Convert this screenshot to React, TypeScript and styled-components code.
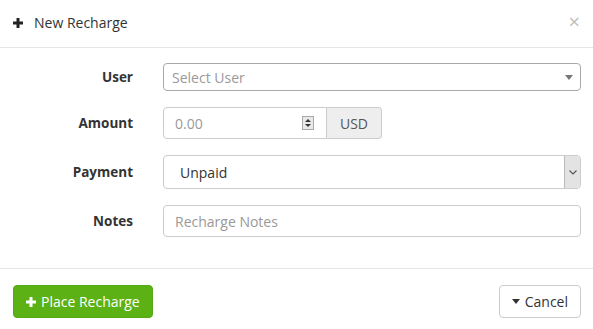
import styled, { createGlobalStyle } from "styled-components";

const GlobalStyle = createGlobalStyle`
  html, body {
    margin: 0;
    padding: 0;
    background: #fff;
  }
  body {
    font-family: "Open Sans", "Liberation Sans", sans-serif;
    color: #333;
    -webkit-font-smoothing: antialiased;
  }
  * { box-sizing: border-box; }
`;

const Modal = styled.div`
  width: 593px;
  height: 329px;
  background: #fff;
  display: flex;
  flex-direction: column;
`;

const Header = styled.div`
  height: 48px;
  border-bottom: 1px solid #e5e5e5;
  display: flex;
  align-items: center;
  padding: 0 13px 2px 13px;
`;

const Title = styled.h4`
  margin: 0;
  flex: 1;
  display: flex;
  align-items: center;
  gap: 11px;
  font-size: 14px;
  font-weight: 400;
  color: #333;
`;

const Close = styled.span`
  color: #bdbdbd;
  font-size: 20px;
  line-height: 1;
  margin-top: -2px;
`;

const Body = styled.div`
  padding: 15px 12px 15px 15px;
  display: flex;
  flex-direction: column;
  gap: 16px;
  height: 221px;
  border-bottom: 1px solid #e5e5e5;
`;

const Row = styled.div`
  display: grid;
  grid-template-columns: 118px 1fr;
  column-gap: 30px;
  align-items: center;
`;

const Label = styled.label`
  text-align: right;
  font-size: 13.5px;
  font-weight: 700;
  color: #333;
`;

const Field = styled.div<{ $h: number; $border?: string; $pl?: number }>`
  height: ${p => p.$h}px;
  border: 1px solid ${p => p.$border || "#ccc"};
  border-radius: 4px;
  background: #fff;
  display: flex;
  align-items: center;
  padding-left: ${p => p.$pl ?? 11}px;
  font-size: 14px;
  color: #333;
  overflow: hidden;
`;

const Placeholder = styled.span`
  color: #999;
  flex: 1;
`;

const Value = styled.span`
  flex: 1;
`;

const Caret = styled.span`
  width: 0;
  height: 0;
  border-left: 4px solid transparent;
  border-right: 4px solid transparent;
  border-top: 5px solid #777;
  margin-right: 7px;
`;

const Group = styled.div`
  display: flex;
  width: 219px;
`;

const NumberBox = styled(Field)`
  flex: 1;
  border-radius: 4px 0 0 4px;
  padding-right: 12px;
`;

const Spinner = styled.span`
  width: 12px;
  height: 14px;
  border: 1px solid #a9a9a9;
  background: #e9e9e9;
  display: flex;
  flex-direction: column;
  align-items: center;
  justify-content: space-around;
  padding: 1px 0;
`;

const Tri = styled.span<{ $up?: boolean }>`
  width: 0;
  height: 0;
  border-left: 3px solid transparent;
  border-right: 3px solid transparent;
  ${p => (p.$up ? "border-bottom: 3px solid #333;" : "border-top: 3px solid #333;")}
`;

const Addon = styled.span`
  width: 55px;
  height: 32px;
  border: 1px solid #ccc;
  border-left: none;
  border-radius: 0 4px 4px 0;
  background: #eee;
  color: #555;
  font-size: 14px;
  display: flex;
  align-items: center;
  justify-content: center;
`;

const SelectButton = styled.span`
  width: 16px;
  align-self: stretch;
  background: #e3e3e3;
  border-left: 1px solid #bbb;
  display: flex;
  align-items: center;
  justify-content: center;
`;

const Footer = styled.div`
  flex: 1;
  display: flex;
  justify-content: space-between;
  align-items: flex-start;
  padding: 16px 12px 0 13px;
`;

const Button = styled.button<{ $primary?: boolean }>`
  height: 33px;
  padding: 0 12px;
  border-radius: 4px;
  font-family: inherit;
  font-size: 14px;
  display: flex;
  align-items: center;
  gap: 5px;
  cursor: pointer;
  border: 1px solid ${p => (p.$primary ? "#55a912" : "#ccc")};
  background: ${p => (p.$primary ? "#5cb115" : "#fff")};
  color: ${p => (p.$primary ? "#fff" : "#333")};
`;

const PlusIcon = ({ color, size }: { color: string; size: number }) => (
  <svg width={size} height={size} viewBox="0 0 10 10">
    <path d="M3.5 0h3v3.5H10v3H6.5V10h-3V6.5H0v-3h3.5z" fill={color} />
  </svg>
);

const Chevron = () => (
  <svg width="8" height="5" viewBox="0 0 8 5">
    <path d="M0.5 0.5L4 4L7.5 0.5" stroke="#555" strokeWidth="1.1" fill="none" />
  </svg>
);

export default function App() {
  return (
    <>
      <GlobalStyle />
      <Modal>
        <Header>
          <Title>
            <PlusIcon color="#222" size={10} />
            New Recharge
          </Title>
          <Close>×</Close>
        </Header>
        <Body>
          <Row>
            <Label>User</Label>
            <Field $h={28} $border="#aaa" $pl={8}>
              <Placeholder>Select User</Placeholder>
              <Caret />
            </Field>
          </Row>
          <Row>
            <Label>Amount</Label>
            <Group>
              <NumberBox $h={32}>
                <Placeholder>0.00</Placeholder>
                <Spinner>
                  <Tri $up />
                  <Tri />
                </Spinner>
              </NumberBox>
              <Addon>USD</Addon>
            </Group>
          </Row>
          <Row>
            <Label>Payment</Label>
            <Field $h={34} $pl={16}>
              <Value>Unpaid</Value>
              <SelectButton>
                <Chevron />
              </SelectButton>
            </Field>
          </Row>
          <Row>
            <Label>Notes</Label>
            <Field $h={32}>
              <Placeholder>Recharge Notes</Placeholder>
            </Field>
          </Row>
        </Body>
        <Footer>
          <Button $primary>
            <PlusIcon color="#fff" size={10} />
            Place Recharge
          </Button>
          <Button>
            <Caret style={{ marginRight: 0, borderTopColor: "#333" }} />
            Cancel
          </Button>
        </Footer>
      </Modal>
    </>
  );
}
